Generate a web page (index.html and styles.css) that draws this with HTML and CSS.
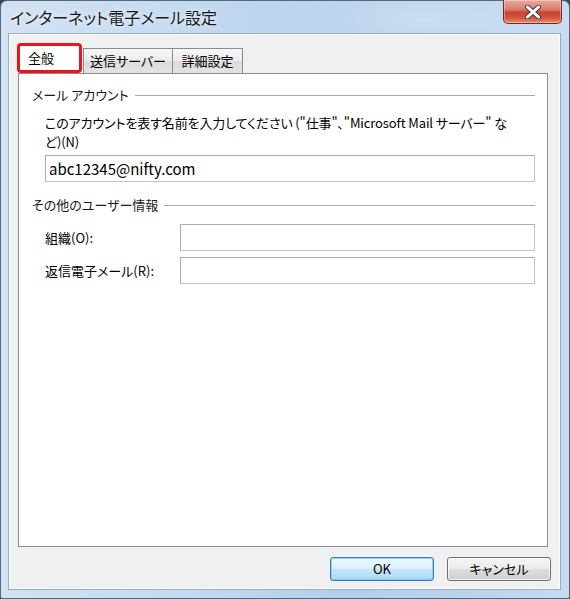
FILE: index.html
```html
<!DOCTYPE html>
<html lang="ja">
<head>
<meta charset="utf-8">
<title>インターネット電子メール設定</title>
<link rel="stylesheet" href="styles.css">
</head>
<body>
<div class="window">
  <div class="titlebar">
    <span class="title">インターネット電子メール設定</span>
    <button class="close" aria-label="閉じる">
      <svg width="18" height="14" viewBox="0 0 18 14">
        <path d="M3.5 2 L14.5 12 M14.5 2 L3.5 12" stroke="#3b3f4a" stroke-width="5" stroke-linecap="round"/>
        <path d="M3.5 2 L14.5 12 M14.5 2 L3.5 12" stroke="#ffffff" stroke-width="3" stroke-linecap="round"/>
      </svg>
    </button>
  </div>
  <div class="client">
    <div class="tabs">
      <div class="tab tab-active">全般</div>
      <div class="tab tab-second">送信サーバー</div>
      <div class="tab tab-third">詳細設定</div>
    </div>
    <div class="panel">
      <div class="group-head">
        <span class="group-label">メール アカウント</span>
        <span class="group-line"></span>
      </div>
      <div class="group-body">
        <p class="desc">このアカウントを表す名前を入力してください ("仕事"、"Microsoft Mail サーバー" な<br>ど)(N)</p>
        <div class="field field-wide"><span class="field-text">abc12345@nifty.com</span></div>
      </div>
      <div class="group-head group-head-second">
        <span class="group-label">その他のユーザー情報</span>
        <span class="group-line"></span>
      </div>
      <div class="group-body">
        <div class="row row-first">
          <span class="row-label">組織(O):</span>
          <div class="field field-row"></div>
        </div>
        <div class="row row-next">
          <span class="row-label">返信電子メール(R):</span>
          <div class="field field-row"></div>
        </div>
      </div>
    </div>
    <div class="actions">
      <button class="btn btn-default">OK</button>
      <button class="btn">キャンセル</button>
    </div>
  </div>
</div>
</body>
</html>
```

FILE: styles.css
```css
* {
  box-sizing: border-box;
}

html, body {
  margin: 0;
  padding: 0;
  background: #3f4954;
}

body {
  font-family: "Noto Sans CJK JP", "Noto Sans", sans-serif;
  font-size: 13px;
  font-feature-settings: "palt";
  color: #000;
}

/* Aero glass frame */
.window {
  width: 570px;
  height: 599px;
  display: flex;
  flex-direction: column;
  padding: 0 9px 9px 8px;
  border: 1px solid #56687c;
  border-radius: 7px 7px 2px 2px;
  background:
    radial-gradient(ellipse 180px 40px at 420px 18px, rgba(255,255,255,0.25), rgba(255,255,255,0)),
    linear-gradient(90deg, #d3e2f2 0%, #c6dbf0 30%, #b4cfeb 60%, #bcd4ee 85%, #c7dbf0 100%);
}

.titlebar {
  height: 33px;
  margin-right: -2px;
  display: flex;
  align-items: flex-start;
  justify-content: space-between;
}

.title {
  margin: 6px 0 0 1px;
  font-size: 16px;
  line-height: 20px;
  color: #1a1a24;
  text-shadow: 0 0 6px rgba(255,255,255,0.9);
}

.close {
  width: 59px;
  height: 24px;
  margin-top: -1px;
  padding: 0;
  display: flex;
  align-items: center;
  justify-content: center;
  border: 1px solid #6e2c24;
  border-top: none;
  border-radius: 0 0 5px 5px;
  background: linear-gradient(180deg, #e9a99c 0%, #dc7e6c 40%, #c8442e 55%, #d35a3f 80%, #e79078 100%);
  box-shadow: inset 0 0 0 1px rgba(255,255,255,0.35);
}

/* Client area */
.client {
  flex: 1;
  display: flex;
  flex-direction: column;
  padding: 8px 0 0 8px;
  background: #f0f0f0;
  border: 1px solid #fbfcfe;
  box-shadow: 0 0 0 1px #97adc6;
}

.tabs {
  height: 30px;
  display: flex;
  align-items: flex-end;
  position: relative;
  z-index: 1;
}

.tab {
  height: 25px;
  display: flex;
  align-items: center;
  justify-content: center;
  border: 1px solid #898c95;
  border-bottom: none;
  background: linear-gradient(180deg, #f6f6f6 0%, #ebebeb 50%, #dcdcdc 51%, #e3e3e3 100%);
  line-height: 16px;
}

.tab-active {
  height: 30px;
  width: 65px;
  margin-left: -1px;
  justify-content: flex-start;
  padding: 0 0 1px 8px;
  border: 3px solid #e8151c;
  border-radius: 4px;
  background: #ffffff;
}

.tab-second {
  width: 90px;
  margin-left: 1px;
}

.tab-third {
  width: 71px;
  margin-left: -1px;
}

.panel {
  flex: 1;
  margin-right: 11px;
  padding: 13px 12px 0 13px;
  background: #ffffff;
  border: 1px solid #898c95;
}

.group-head {
  height: 16px;
  display: flex;
  align-items: center;
  line-height: 16px;
}

.group-head-second {
  margin-top: 15px;
}

.group-label {
  color: #1a1a1a;
  white-space: nowrap;
}

.group-line {
  flex: 1;
  height: 1px;
  margin-left: 6px;
  margin-top: 1px;
  background: #a9a9a9;
}

.group-body {
  padding-left: 13px;
}

.desc {
  margin: 10px 0 0;
  line-height: 19px;
  letter-spacing: -0.12px;
}

.field {
  height: 27px;
  padding-left: 3px;
  display: flex;
  align-items: center;
  background: #ffffff;
  border: 1px solid #abadb3;
  border-right-color: #c3c4c8;
  border-bottom-color: #c3c4c8;
  line-height: 16px;
}

.field-text {
  font-size: 15px;
}

.field-wide {
  margin-top: 4px;
}

.row {
  display: flex;
  align-items: center;
}

.row-first {
  margin-top: 11px;
}

.row-next {
  margin-top: 6px;
}

.row-label {
  width: 135px;
  line-height: 16px;
}

.field-row {
  flex: 1;
}

/* Dialog buttons */
.actions {
  height: 24px;
  margin: 10px 0 7px;
  padding-right: 8px;
  display: flex;
  justify-content: flex-end;
  gap: 13px;
}

.btn {
  width: 104px;
  height: 24px;
  padding: 0;
  font-family: inherit;
  font-size: 13px;
  font-feature-settings: "palt";
  line-height: 16px;
  color: #000;
  border: 1px solid #707070;
  border-radius: 3px;
  background: linear-gradient(180deg, #f4f4f4 0%, #ebebeb 48%, #dddddd 52%, #cfcfcf 100%);
  box-shadow: inset 0 0 0 1px rgba(255,255,255,0.7);
}

.btn-default {
  border-color: #3c7fb1;
  background: linear-gradient(180deg, #ecf7fd 0%, #dcf1fc 48%, #c4e6f9 52%, #acd9f3 100%);
  box-shadow: inset 0 0 0 1px rgba(120,200,240,0.8);
}
```
